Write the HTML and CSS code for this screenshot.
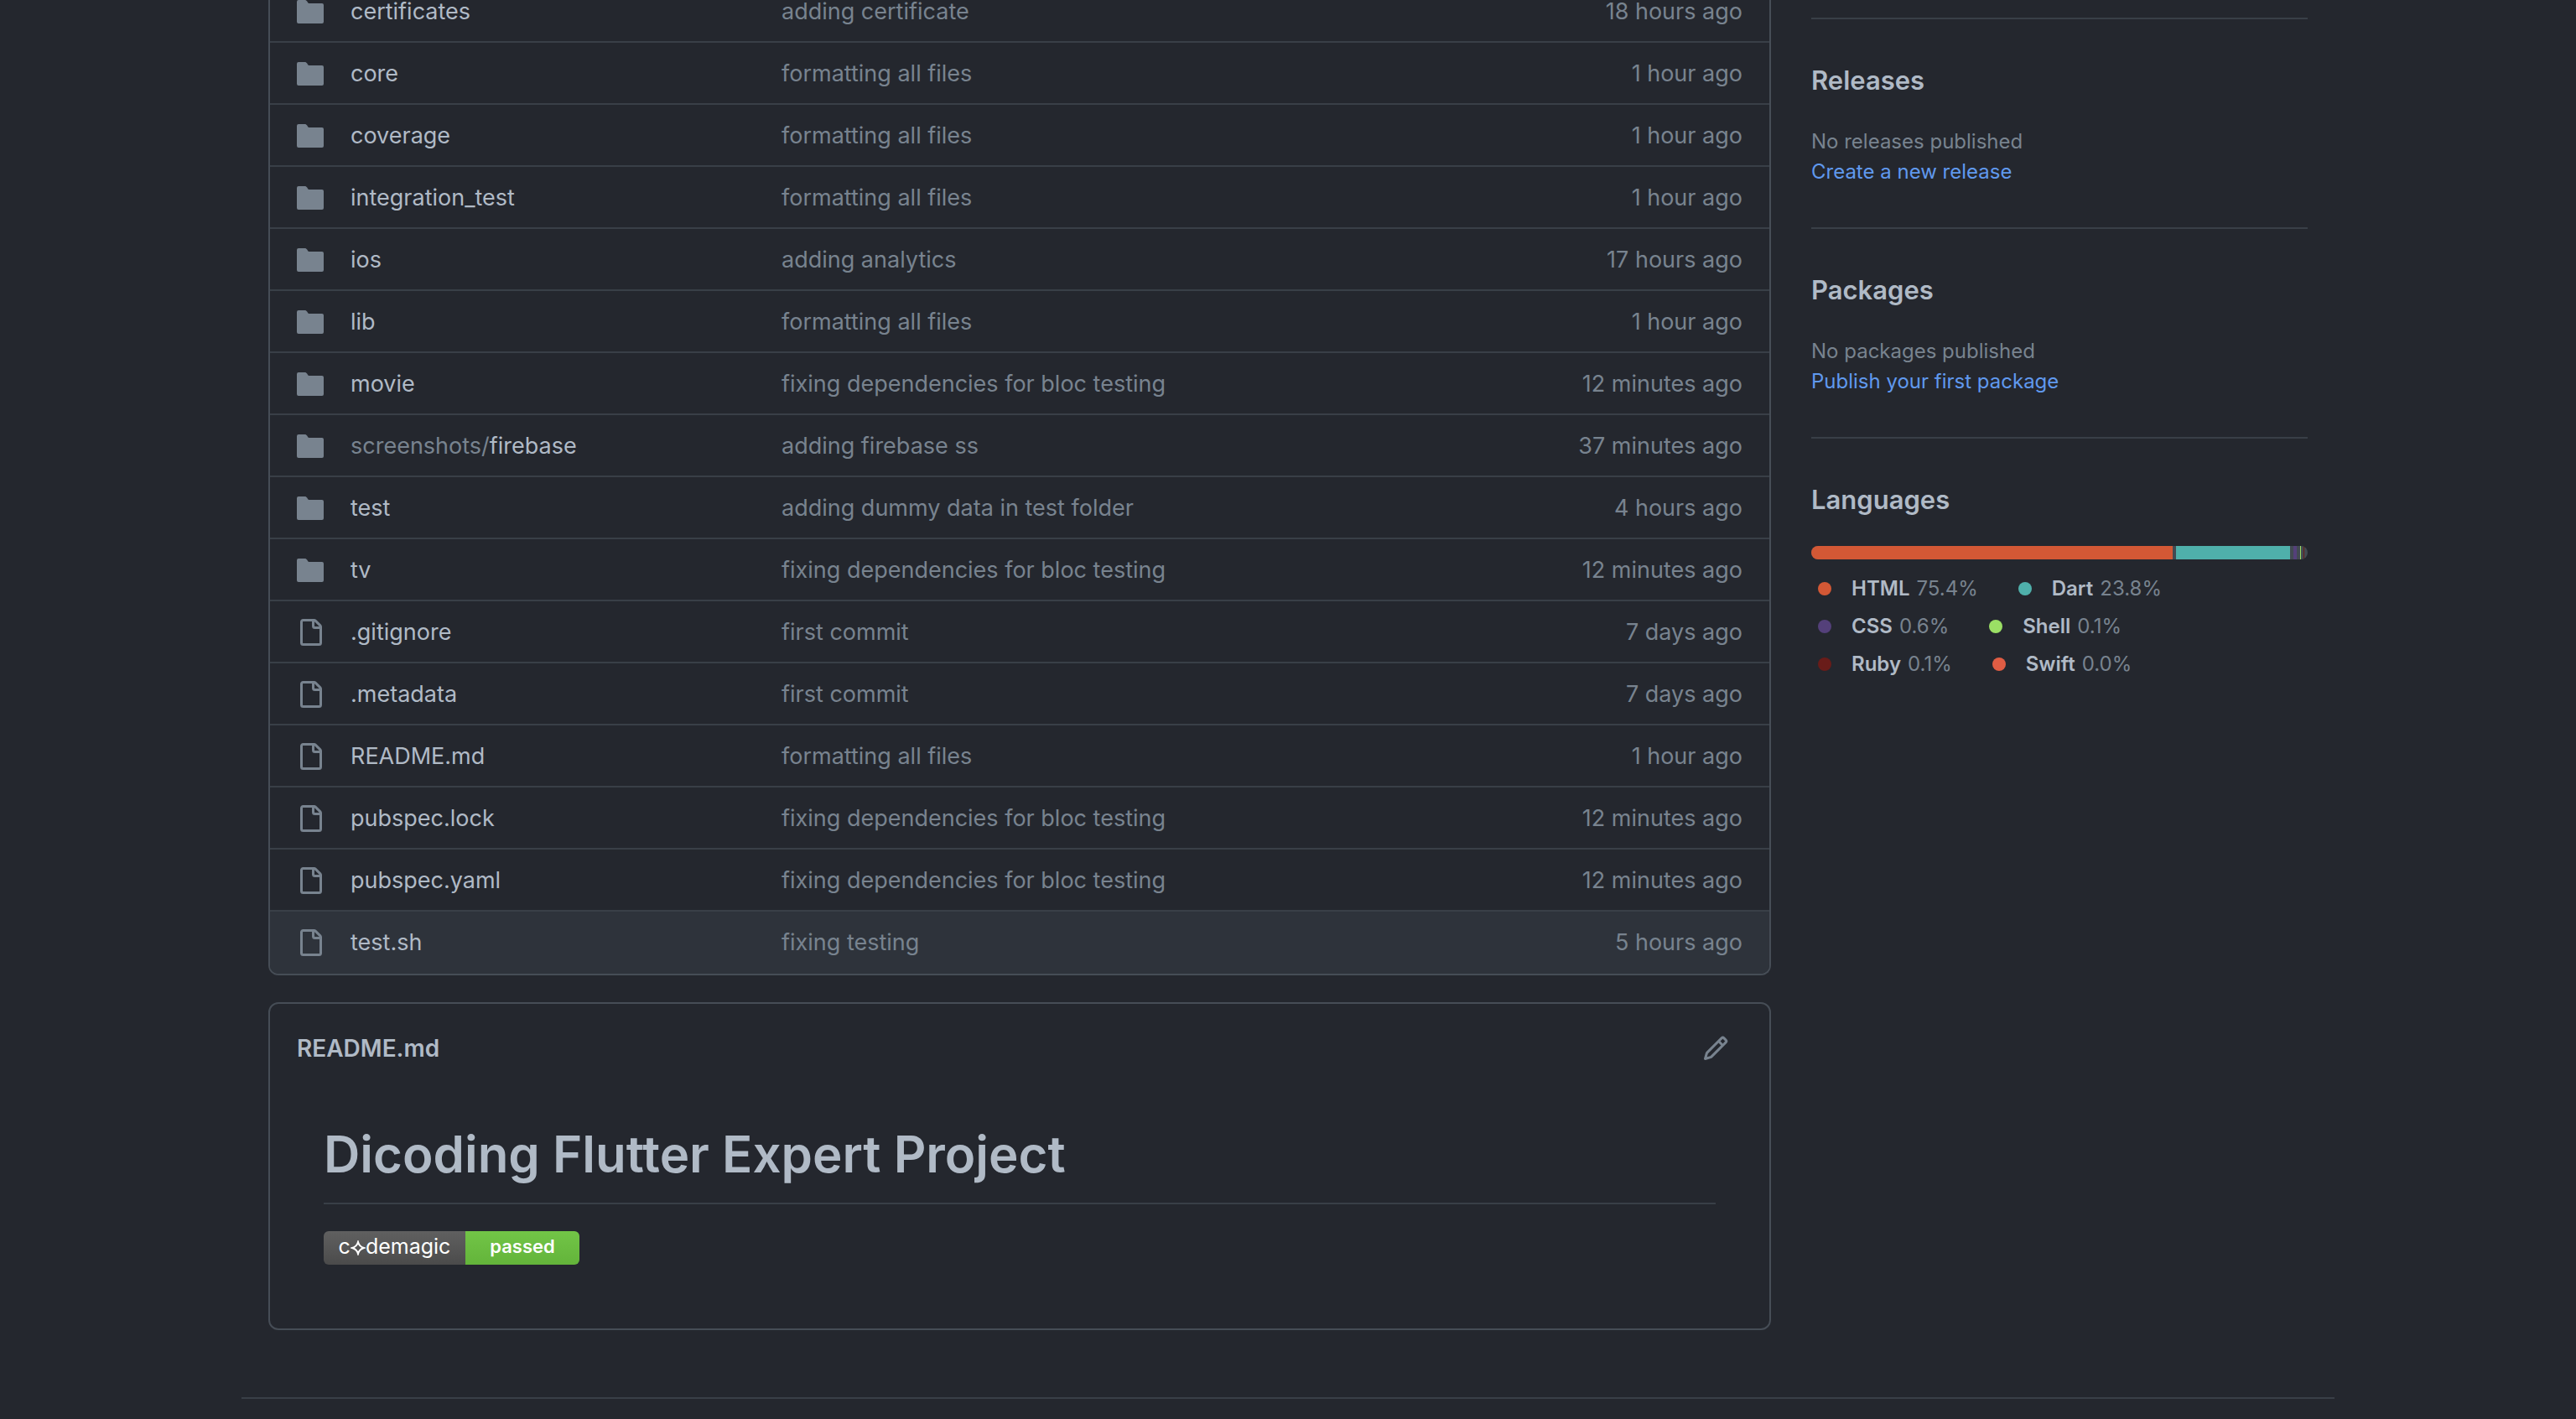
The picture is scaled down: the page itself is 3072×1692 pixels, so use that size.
FILE: index.html
```html
<!DOCTYPE html>
<html lang="en">
<head>
<meta charset="utf-8">
<title>Repository</title>
<link rel="stylesheet" href="styles.css">
</head>
<body>
<svg class="sprite" aria-hidden="true">
  <symbol id="folder" viewBox="0 0 16 16"><path d="M0.750 1H4.700C5.300 1 5.800 1.300 6.100 1.750L6.600 2.600C6.750 2.850 7 3 7.300 3H15A1 1 0 0116 4V14A1 1 0 0115 15H1A1 1 0 010 14V2A1 1 0 011 1z"/></symbol>
  <symbol id="file" viewBox="0 0 16 16"><path fill-rule="evenodd" d="M2 1.750C2 .784 2.784 0 3.750 0h6.586c.464 0 .909.184 1.237.513l2.914 2.914c.329.328.513.773.513 1.237v9.586A1.750 1.750 0 0113.250 16h-9.500A1.750 1.750 0 012 14.250V1.750zm1.750-.250a.250.250 0 00-.250.250v12.500c0 .138.112.250.250.250h9.500a.250.250 0 00.250-.250V6h-2.750A1.750 1.750 0 019 4.250V1.500H3.750zm6.750.062V4.250c0 .138.112.250.250.250h2.688a.252.252 0 00-.011-.013l-2.914-2.914a.272.272 0 00-.013-.011z"/></symbol>
</svg>
<div class="container">
  <main class="main">
    <table class="files">
      <tbody>
        <tr><td class="icon"><svg><use href="#folder"/></svg></td><td class="name"><a href="#">certificates</a></td><td class="msg"><a href="#">adding certificate</a></td><td class="age">18 hours ago</td></tr>
        <tr><td class="icon"><svg><use href="#folder"/></svg></td><td class="name"><a href="#">core</a></td><td class="msg"><a href="#">formatting all files</a></td><td class="age">1 hour ago</td></tr>
        <tr><td class="icon"><svg><use href="#folder"/></svg></td><td class="name"><a href="#">coverage</a></td><td class="msg"><a href="#">formatting all files</a></td><td class="age">1 hour ago</td></tr>
        <tr><td class="icon"><svg><use href="#folder"/></svg></td><td class="name"><a href="#">integration_test</a></td><td class="msg"><a href="#">formatting all files</a></td><td class="age">1 hour ago</td></tr>
        <tr><td class="icon"><svg><use href="#folder"/></svg></td><td class="name"><a href="#">ios</a></td><td class="msg"><a href="#">adding analytics</a></td><td class="age">17 hours ago</td></tr>
        <tr><td class="icon"><svg><use href="#folder"/></svg></td><td class="name"><a href="#">lib</a></td><td class="msg"><a href="#">formatting all files</a></td><td class="age">1 hour ago</td></tr>
        <tr><td class="icon"><svg><use href="#folder"/></svg></td><td class="name"><a href="#">movie</a></td><td class="msg"><a href="#">fixing dependencies for bloc testing</a></td><td class="age">12 minutes ago</td></tr>
        <tr><td class="icon"><svg><use href="#folder"/></svg></td><td class="name"><a href="#"><span class="parent">screenshots/</span>firebase</a></td><td class="msg"><a href="#">adding firebase ss</a></td><td class="age">37 minutes ago</td></tr>
        <tr><td class="icon"><svg><use href="#folder"/></svg></td><td class="name"><a href="#">test</a></td><td class="msg"><a href="#">adding dummy data in test folder</a></td><td class="age">4 hours ago</td></tr>
        <tr><td class="icon"><svg><use href="#folder"/></svg></td><td class="name"><a href="#">tv</a></td><td class="msg"><a href="#">fixing dependencies for bloc testing</a></td><td class="age">12 minutes ago</td></tr>
        <tr><td class="icon"><svg><use href="#file"/></svg></td><td class="name"><a href="#">.gitignore</a></td><td class="msg"><a href="#">first commit</a></td><td class="age">7 days ago</td></tr>
        <tr><td class="icon"><svg><use href="#file"/></svg></td><td class="name"><a href="#">.metadata</a></td><td class="msg"><a href="#">first commit</a></td><td class="age">7 days ago</td></tr>
        <tr><td class="icon"><svg><use href="#file"/></svg></td><td class="name"><a href="#">README.md</a></td><td class="msg"><a href="#">formatting all files</a></td><td class="age">1 hour ago</td></tr>
        <tr><td class="icon"><svg><use href="#file"/></svg></td><td class="name"><a href="#">pubspec.lock</a></td><td class="msg"><a href="#">fixing dependencies for bloc testing</a></td><td class="age">12 minutes ago</td></tr>
        <tr><td class="icon"><svg><use href="#file"/></svg></td><td class="name"><a href="#">pubspec.yaml</a></td><td class="msg"><a href="#">fixing dependencies for bloc testing</a></td><td class="age">12 minutes ago</td></tr>
        <tr class="active"><td class="icon"><svg><use href="#file"/></svg></td><td class="name"><a href="#">test.sh</a></td><td class="msg"><a href="#">fixing testing</a></td><td class="age">5 hours ago</td></tr>
      </tbody>
    </table>
    <section class="readme">
      <header class="readme-head">
        <h2>README.md</h2>
        <button class="edit" type="button" aria-label="Edit this file"><svg viewBox="0 0 16 16"><path fill-rule="evenodd" d="M11.013 1.427a1.75 1.75 0 012.474 0l1.086 1.086a1.75 1.75 0 010 2.474l-8.610 8.610c-.21.21-.47.364-.756.445l-3.251.93a.75.75 0 01-.927-.928l.929-3.250a1.75 1.75 0 01.445-.758l8.610-8.610zm1.414 1.060a.25.25 0 00-.354 0L10.811 3.750l1.439 1.440 1.263-1.263a.25.25 0 000-.354l-1.086-1.086zM11.189 6.250L9.750 4.810l-6.286 6.287a.25.25 0 00-.064.108l-.558 1.953 1.953-.558a.249.249 0 00.108-.064l6.286-6.286z"/></svg></button>
      </header>
      <div class="readme-body">
        <h1>Dicoding Flutter Expert Project</h1>
        <a class="badge" href="#"><span class="brand">c<svg viewBox="0 0 18 18"><path d="M9 2Q10.500 7.500 16 9Q10.500 10.500 9 16Q7.500 10.500 2 9Q7.500 7.500 9 2Z"/></svg>demagic</span><span class="status">passed</span></a>
      </div>
    </section>
  </main>
  <aside class="sidebar">
    <section>
      <h2>Releases</h2>
      <p>No releases published</p>
      <p><a href="#">Create a new release</a></p>
    </section>
    <section>
      <h2>Packages</h2>
      <p>No packages published</p>
      <p><a href="#">Publish your first package</a></p>
    </section>
    <section>
      <h2>Languages</h2>
      <div class="bar">
        <span class="html" style="width:75.4%"></span>
        <span class="dart" style="width:23.8%"></span>
        <span class="css" style="width:0.6%"></span>
        <span class="shell" style="width:0.1%"></span>
        <span class="ruby" style="width:0.1%"></span>
        <span class="swift" style="width:0%"></span>
      </div>
      <ul class="langs">
        <li><i class="html"></i><b>HTML</b> 75.4%</li>
        <li><i class="dart"></i><b>Dart</b> 23.8%</li>
        <li><i class="css"></i><b>CSS</b> 0.6%</li>
        <li><i class="shell"></i><b>Shell</b> 0.1%</li>
        <li><i class="ruby"></i><b>Ruby</b> 0.1%</li>
        <li><i class="swift"></i><b>Swift</b> 0.0%</li>
      </ul>
    </section>
  </aside>
</div>
<footer class="footer"></footer>
</body>
</html>
```
FILE: styles.css
```css
* { box-sizing: border-box; }
body {
  margin: 0;
  background: #24272e;
  color: #b0bac6;
  font: 27px/40px Inter, "Liberation Sans", sans-serif;
  overflow: hidden;
}
a { color: inherit; text-decoration: none; }
h1, h2, p { margin: 0; }
svg { display: block; fill: #78838f; }
.sprite { display: none; }

.container {
  display: flex;
  align-items: flex-start;
  gap: 48px;
  max-width: 2560px;
  margin: 0 auto;
  padding: 0 64px;
}
.main { flex: 1; min-width: 0; }

/* File list: the top is scrolled out of view */
.files {
  width: 100%;
  margin-top: -25px;
  border: 2px solid #464d56;
  border-top: 0;
  border-radius: 0 0 12px 12px;
  border-spacing: 0;
  overflow: hidden;
  table-layout: fixed;
}
.files td {
  height: 74px;
  padding: 2px 0 0;
  border-top: 2px solid #393f47;
  white-space: nowrap;
}
.files .icon { width: 96px; padding-left: 32px; }
.files .name { width: 514px; }
.files .age { width: 300px; padding-right: 32px; text-align: right; }
.icon svg { width: 32px; height: 32px; }
.msg, .age, .parent { color: #78838f; }
.files .active td { height: 76px; padding-bottom: 2px; background: #2e333b; }

.readme {
  margin-top: 32px;
  border: 2px solid #464d56;
  border-radius: 12px;
}
.readme-head {
  display: flex;
  align-items: center;
  justify-content: space-between;
  padding: 33px 48px 0 32px;
}
.readme-head h2 { font-size: 28px; font-weight: 600; }
.edit { padding: 0; border: 0; background: none; }
.edit svg { width: 32px; height: 32px; }
.readme-body { padding: 66px 64px 76px; }
.readme-body h1 {
  margin-bottom: 32px;
  padding-bottom: 18px;
  border-bottom: 2px solid #393f47;
  font-size: 60px;
  line-height: 80px;
  font-weight: 600;
}
.badge {
  display: flex;
  width: 305px;
  height: 40px;
  border-radius: 6px;
  overflow: hidden;
  color: #fff;
}
.brand, .status { display: flex; align-items: center; justify-content: center; padding-bottom: 4px; }
.brand { width: 169px; background: linear-gradient(#606060, #4b4b4b); font-size: 25px; }
.brand svg { width: 18px; height: 18px; margin-top: 4px; fill: none; stroke: #fff; stroke-width: 2; }
.status { flex: 1; background: linear-gradient(#72c547, #63b43a); font-size: 22px; font-weight: 600; }

.sidebar { width: 592px; padding-top: 21px; font-size: 24px; line-height: 36px; color: #78838f; }
.sidebar section { border-top: 2px solid #393f47; padding: 48px 0; }
.sidebar h2 { margin-bottom: 30px; color: #b0bac6; font-size: 31px; line-height: 50px; font-weight: 600; }
.sidebar a { color: #6099ee; }
.bar { display: flex; gap: 4px; height: 16px; border-radius: 12px; background: #424a52; overflow: hidden; }
.langs { display: flex; flex-wrap: wrap; margin: 12px 0 0; padding: 0; list-style: none; line-height: 45px; }
.langs li { display: flex; align-items: center; gap: 8px; margin-right: 40px; }
.langs b { color: #b0bac6; font-weight: 600; }
.langs i { width: 16px; height: 16px; margin: 0 16px 0 8px; border-radius: 50%; }
.html { background: #d35835; }
.dart { background: #4fb0ab; }
.css { background: #54407a; }
.shell { background: #9bdf65; }
.ruby { background: #691c19; }
.swift { background: #e05d44; }

.footer {
  max-width: 2496px;
  margin: 80px auto 0;
  border-top: 2px solid #393f47;
}
```
